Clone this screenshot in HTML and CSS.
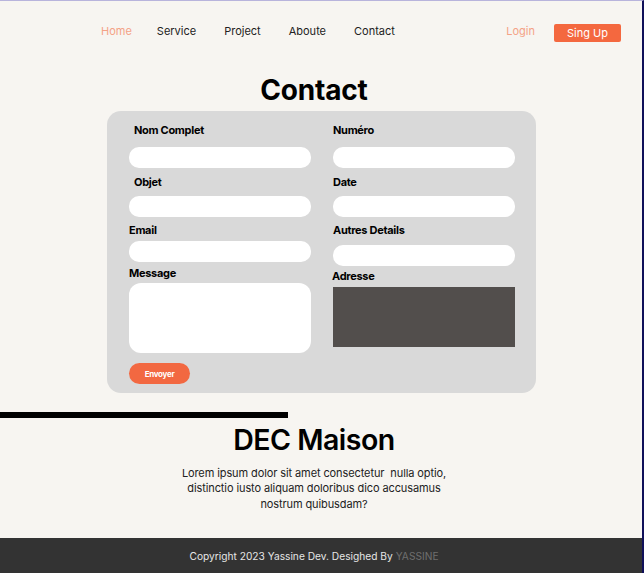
FILE: index.html
```html
<!DOCTYPE html>
<html lang="fr">
<head>
<meta charset="utf-8">
<title>Contact</title>
<link rel="stylesheet" href="styles.css">
</head>
<body>
<div class="page">
  <header class="nav">
    <ul class="menu">
      <li class="active">Home</li>
      <li>Service</li>
      <li>Project</li>
      <li>Aboute</li>
      <li>Contact</li>
    </ul>
    <div class="auth">
      <span class="login">Login</span>
      <span class="signup">Sing Up</span>
    </div>
  </header>

  <main>
    <h1 class="title">Contact</h1>
    <form class="card">
      <div class="col">
        <label class="lbl ind">Nom Complet</label>
        <div class="input i1"></div>
        <label class="lbl ind l2">Objet</label>
        <div class="input i2"></div>
        <label class="lbl l3">Email</label>
        <div class="input i3"></div>
        <label class="lbl l4">Message</label>
        <div class="textarea"></div>
        <span class="send">Envoyer</span>
      </div>
      <div class="col">
        <label class="lbl">Numéro</label>
        <div class="input i1"></div>
        <label class="lbl l2">Date</label>
        <div class="input i2"></div>
        <label class="lbl l3">Autres Details</label>
        <div class="input r3"></div>
        <label class="lbl r4">Adresse</label>
        <div class="map"></div>
      </div>
    </form>

    <div class="rule"></div>
    <section class="about">
      <h2>DEC Maison</h2>
      <p>Lorem ipsum dolor sit amet consectetur&nbsp; nulla optio,<br>distinctio iusto aliquam doloribus dico accusamus<br>nostrum quibusdam?</p>
    </section>
  </main>

  <footer class="footer">
    Copyright 2023 Yassine Dev. Desighed By <span class="brand">YASSINE</span>
  </footer>
</div>
</body>
</html>
```

FILE: styles.css
```css
* { box-sizing: border-box; }
html, body { margin: 0; padding: 0; }
body {
  background: #f7f5f1;
  font-family: Inter, "Noto Sans", sans-serif;
  color: #111;
}
.page {
  min-height: 573px;
  display: flex;
  flex-direction: column;
  border-top: 1px solid #b8b4dc;
  border-right: 2px solid #10105a;
}
.nav {
  height: 60px;
  display: flex;
  align-items: center;
  padding: 0 21px 0 101px;
}
.menu {
  list-style: none;
  margin: 0;
  padding: 0;
  display: flex;
  font-size: 11px;
  color: #222;
}
.menu li { margin-right: 28px; }
.menu li:nth-child(1) { margin-right: 25px; }
.menu li.active { color: #f4a286; }
.auth {
  margin-left: auto;
  display: flex;
  align-items: center;
  font-size: 11px;
}
.login { color: #f4a286; margin-right: 19px; }
.signup {
  background: #f4683f;
  color: #fff;
  width: 67px;
  height: 18px;
  border-radius: 2px;
  display: flex;
  align-items: center;
  justify-content: center;
  margin-top: 3px;
}
main { flex: 1; width: 628px; }
.title {
  margin: 11px 0 0;
  text-align: center;
  font-size: 28px;
  font-weight: 700;
  line-height: 36px;
  letter-spacing: -0.2px;
  color: #000;
}
.card {
  margin: 3px 0 0 107px;
  width: 429px;
  height: 282px;
  background: #d9d9d9;
  border-radius: 14px;
  padding: 12px 21px 0 22px;
  display: grid;
  grid-template-columns: 182px 182px;
  column-gap: 22px;
}
.col { display: flex; flex-direction: column; align-items: flex-start; }
.lbl {
  font-size: 11px;
  font-weight: 700;
  line-height: 14px;
  letter-spacing: -0.3px;
  color: #000;
}
.ind { margin-left: 5px; }
.input {
  width: 182px;
  height: 21px;
  background: #fff;
  border-radius: 10px;
}
.i1 { margin-top: 10px; }
.l2 { margin-top: 7px; }
.i2 { margin-top: 7px; }
.l3 { margin-top: 6px; }
.i3 { margin-top: 4px; }
.r3 { margin-top: 8px; }
.l4 { margin-top: 4px; }
.r4 { margin-top: 3px; margin-left: -1px; }
.textarea {
  margin-top: 3px;
  width: 182px;
  height: 70px;
  background: #fff;
  border-radius: 12px;
}
.map {
  margin-top: 4px;
  width: 182px;
  height: 60px;
  background: #524e4c;
}
.send {
  margin-top: 10px;
  width: 61px;
  height: 21px;
  border-radius: 11px;
  background: #f26841;
  color: #fff;
  font-size: 8px;
  font-weight: 700;
  letter-spacing: -0.3px;
  display: flex;
  align-items: center;
  justify-content: center;
}
.rule {
  margin-top: 19px;
  width: 288px;
  height: 6px;
  background: #000;
}
.about { text-align: center; }
.about h2 {
  margin: 4px 0 0;
  font-size: 28.5px;
  font-weight: 600;
  line-height: 36px;
  letter-spacing: -0.5px;
  color: #000;
}
.about p {
  margin: 8px 0 0;
  font-size: 11px;
  line-height: 15.3px;
  color: #222;
  letter-spacing: -0.1px;
}
.footer {
  height: 35px;
  background: #333333;
  color: #e6e6e6;
  font-size: 10.2px;
  display: flex;
  align-items: center;
  justify-content: center;
  padding-right: 14px;
  margin-top: 19px;
}
.brand { color: #6f6f6f; margin-left: 3px; }
```
